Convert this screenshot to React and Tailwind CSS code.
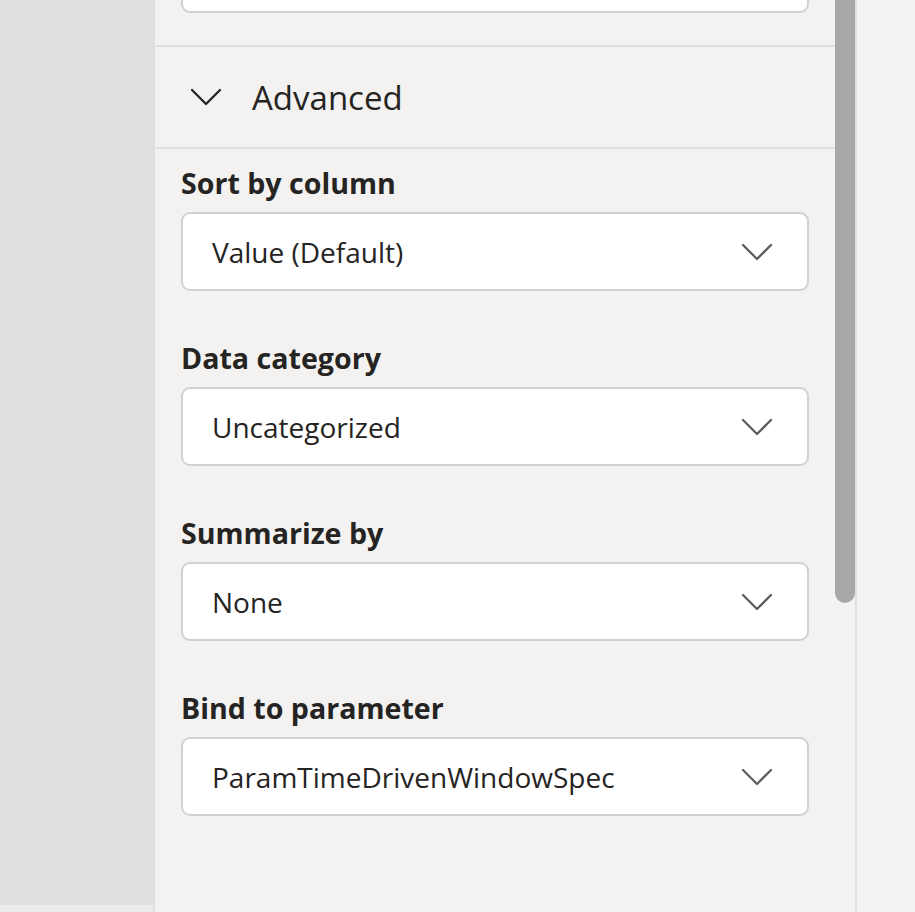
import React from "react";

const Chevron = ({ className }) => (
  <svg viewBox="0 0 32 18" className={className} fill="none" stroke="currentColor" strokeWidth="2.3" strokeLinecap="round" strokeLinejoin="round">
    <path d="M2 2 L16 16 L30 2" />
  </svg>
);

const Field = ({ label, value }) => (
  <div className="flex flex-col">
    <div className="h-[36px] flex items-center text-[28.6px] font-bold text-[#252423] leading-none">{label}</div>
    <div className="mt-[11px] h-[79px] w-[628px] rounded-[9px] border-2 border-[#d1d1d1] bg-white flex items-center justify-between pl-[29px] pr-[34px]">
      <span className="text-[28px] text-[#252423] leading-none">{value}</span>
      <Chevron className="w-[32px] h-[18px] text-[#605e5c]" />
    </div>
  </div>
);

export default function App() {
  return (
    <div className="flex h-[912px] w-[915px] overflow-hidden" style={{ fontFamily: "'Open Sans', 'Noto Sans', sans-serif" }}>
      <div className="w-[155px] bg-[#e0dfdd] flex flex-col justify-end">
        <div className="h-[7px] w-[153px] bg-[#ebebeb]" />
      </div>
      <div className="w-[680px] bg-[#f3f2f1] flex flex-col">
        <div className="px-[26px]">
          <div className="h-[13px] rounded-b-[9px] border-2 border-t-0 border-[#d1d1d1] bg-white" />
        </div>
        <div className="mt-[32px] h-[2px] bg-[#e1dfdd]" />
        <div className="h-[100px] flex items-center">
          <Chevron className="ml-[35px] w-[32px] h-[18px] text-[#252423]" />
          <span className="ml-[30px] text-[33px] text-[#252423] leading-none">Advanced</span>
        </div>
        <div className="h-[2px] bg-[#e1dfdd]" />
        <div className="px-[26px] pt-[16px] flex flex-col gap-[49px]">
          <Field label="Sort by column" value="Value (Default)" />
          <Field label="Data category" value="Uncategorized" />
          <Field label="Summarize by" value="None" />
          <Field label="Bind to parameter" value="ParamTimeDrivenWindowSpec" />
        </div>
      </div>
      <div className="w-[20px] bg-[#f3f2f1] flex flex-col">
        <div className="h-[603px] bg-[#a8a8a8] rounded-b-[10px]" />
      </div>
      <div className="w-[2px] bg-[#e1dfdd]" />
      <div className="flex-1 bg-[#f3f2f1]" />
    </div>
  );
}
